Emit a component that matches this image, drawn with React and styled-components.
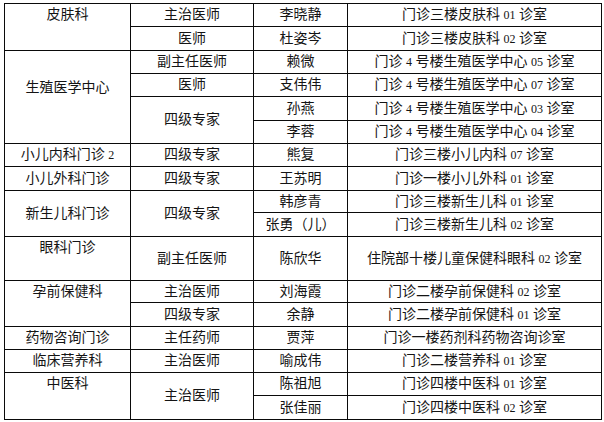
import React from "react";
import styled, { createGlobalStyle } from "styled-components";

const GlobalStyle = createGlobalStyle`
  html, body {
    margin: 0;
    padding: 0;
    background: #ffffff;
  }
`;

const Page = styled.div`
  padding: 3px 0 0 4px;
  width: 604px;
  height: 422px;
  box-sizing: border-box;
  overflow: hidden;
`;

const Table = styled.table`
  width: 598px;
  border-collapse: collapse;
  table-layout: fixed;
  font-family: "Liberation Serif", "Noto Sans CJK SC", sans-serif;
  font-size: 14px;
  color: #141414;
`;

const Col = styled.col`
  width: ${(p) => (p.$w ? `${p.$w}px` : "auto")};
`;

const Row = styled.tr`
  height: ${(p) => p.$h}px;
`;

const Cell = styled.td`
  border: 1px solid #0a0a0a;
  padding: 0 0 ${(p) => (p.$lift ? 19 : 0)}px 0;
  text-align: center;
  vertical-align: ${(p) => (p.$top ? "top" : "middle")};
  line-height: ${(p) => (p.$top ? "22px" : "18px")};
  white-space: nowrap;
  overflow: hidden;
`;

const Num = styled.span`
  font-family: "Liberation Serif", serif;
  font-size: 12px;
`;

const columns = [126, 123, 94, null];

const rows = [
  { h: 23, cells: [{ t: "皮肤科", rs: 2, top: true }, { t: "主治医师" }, { t: "李晓静" }, { t: "门诊三楼皮肤科 01 诊室" }] },
  { h: 24, cells: [{ t: "医师" }, { t: "杜姿岑" }, { t: "门诊三楼皮肤科 02 诊室" }] },
  { h: 23, cells: [{ t: "生殖医学中心", rs: 4, lift: true }, { t: "副主任医师" }, { t: "赖微" }, { t: "门诊 4 号楼生殖医学中心 05 诊室" }] },
  { h: 23, cells: [{ t: "医师" }, { t: "支伟伟" }, { t: "门诊 4 号楼生殖医学中心 07 诊室" }] },
  { h: 24, cells: [{ t: "四级专家", rs: 2 }, { t: "孙燕" }, { t: "门诊 4 号楼生殖医学中心 03 诊室" }] },
  { h: 23, cells: [{ t: "李蓉" }, { t: "门诊 4 号楼生殖医学中心 04 诊室" }] },
  { h: 23, cells: [{ t: "小儿内科门诊 2" }, { t: "四级专家" }, { t: "熊复" }, { t: "门诊三楼小儿内科 07 诊室" }] },
  { h: 24, cells: [{ t: "小儿外科门诊" }, { t: "四级专家" }, { t: "王苏明" }, { t: "门诊一楼小儿外科 01 诊室" }] },
  { h: 22, cells: [{ t: "新生儿科门诊", rs: 2 }, { t: "四级专家", rs: 2 }, { t: "韩彦青" }, { t: "门诊三楼新生儿科 01 诊室" }] },
  { h: 24, cells: [{ t: "张勇（儿）" }, { t: "门诊三楼新生儿科 02 诊室" }] },
  { h: 44, cells: [{ t: "眼科门诊", top: true }, { t: "副主任医师" }, { t: "陈欣华" }, { t: "住院部十楼儿童保健科眼科 02 诊室" }] },
  { h: 22, cells: [{ t: "孕前保健科", rs: 2, top: true }, { t: "主治医师" }, { t: "刘海霞" }, { t: "门诊二楼孕前保健科 02 诊室" }] },
  { h: 24, cells: [{ t: "四级专家" }, { t: "余静" }, { t: "门诊二楼孕前保健科 01 诊室" }] },
  { h: 23, cells: [{ t: "药物咨询门诊" }, { t: "主任药师" }, { t: "贾萍" }, { t: "门诊一楼药剂科药物咨询诊室" }] },
  { h: 23, cells: [{ t: "临床营养科" }, { t: "主治医师" }, { t: "喻成伟" }, { t: "门诊二楼营养科 01 诊室" }] },
  { h: 23, cells: [{ t: "中医科", rs: 2, top: true }, { t: "主治医师", rs: 2 }, { t: "陈祖旭" }, { t: "门诊四楼中医科 01 诊室" }] },
  { h: 24, cells: [{ t: "张佳丽" }, { t: "门诊四楼中医科 02 诊室" }] },
];

// digits in the source are set smaller than the hanzi
function Text({ value }) {
  return value.split(/(\d+)/).map((part, i) =>
    /^\d+$/.test(part) ? <Num key={i}>{part}</Num> : <React.Fragment key={i}>{part}</React.Fragment>
  );
}

export default function App() {
  return (
    <>
      <GlobalStyle />
      <Page>
        <Table>
          <colgroup>
            {columns.map((w, i) => (
              <Col key={i} $w={w} />
            ))}
          </colgroup>
          <tbody>
            {rows.map((row, r) => (
              <Row key={r} $h={row.h}>
                {row.cells.map((c, i) => (
                  <Cell key={i} rowSpan={c.rs} $top={c.top} $lift={c.lift}>
                    <Text value={c.t} />
                  </Cell>
                ))}
              </Row>
            ))}
          </tbody>
        </Table>
      </Page>
    </>
  );
}
